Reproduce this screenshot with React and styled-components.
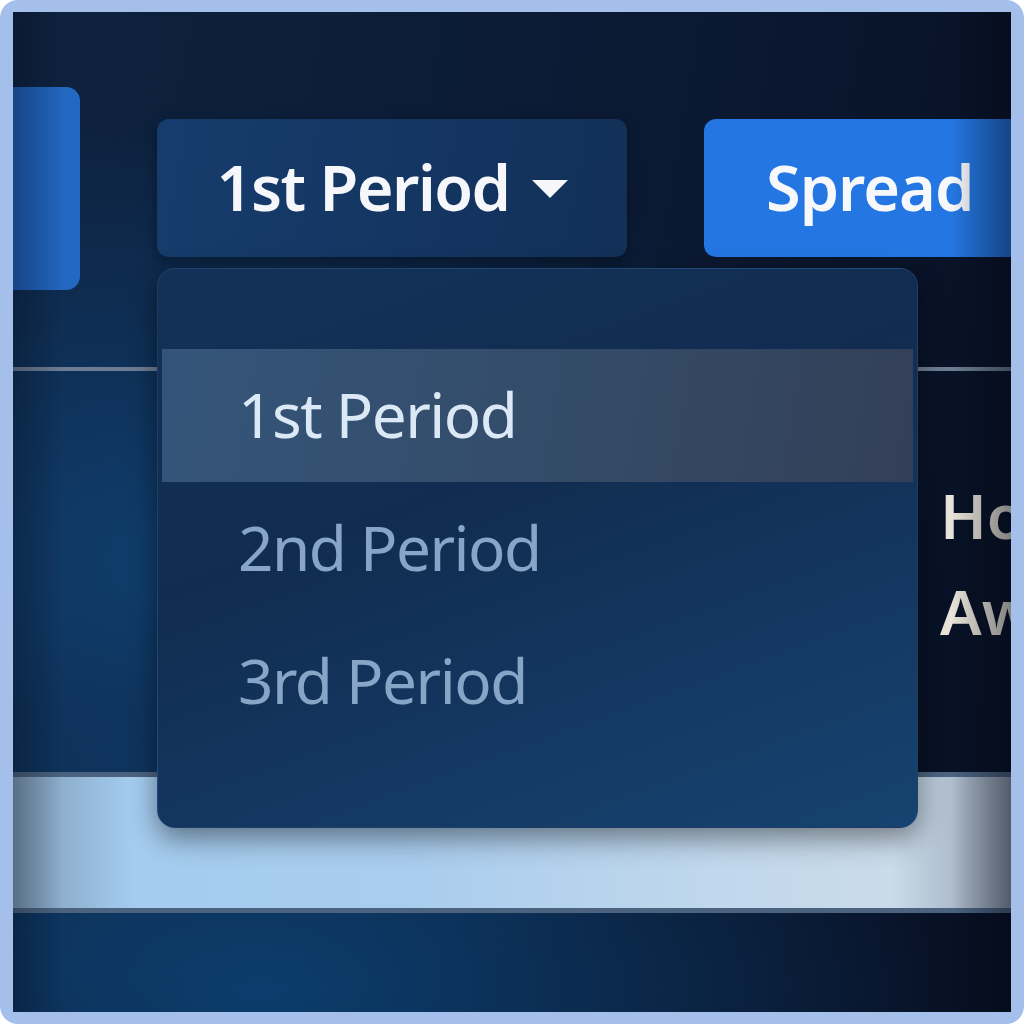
import React, { useState } from 'react';
import styled, { createGlobalStyle } from 'styled-components';

const GlobalStyle = createGlobalStyle`
    html,
    body {
        margin: 0;
        padding: 0;
        background: #ffffff;
    }
    body {
        font-family: 'Noto Sans', 'Open Sans', 'DejaVu Sans', sans-serif;
    }
`;

const Frame = styled.div`
    width: 1024px;
    height: 1024px;
    box-sizing: border-box;
    padding: 12px 13px 12px 13px;
    background: #a4bfe9;
    border-radius: 18px;
`;

const Screen = styled.div`
    position: relative;
    height: 1000px;
    overflow: hidden;
    display: flex;
    flex-direction: column;
    background:
        radial-gradient(ellipse 70% 45% at 18% 55%, rgba(16, 68, 120, 0.85) 0%, rgba(16, 68, 120, 0) 100%),
        radial-gradient(ellipse 70% 30% at 25% 98%, rgba(12, 64, 114, 0.9) 0%, rgba(12, 64, 114, 0) 100%),
        linear-gradient(100deg, #0e223f 0%, #0b1a33 55%, #070f22 100%);

    &:after {
        content: '';
        position: absolute;
        inset: 0;
        pointer-events: none;
        background: linear-gradient(
            90deg,
            rgba(3, 8, 20, 0.3) 0%,
            rgba(3, 8, 20, 0) 5%,
            rgba(3, 8, 20, 0) 94%,
            rgba(3, 8, 20, 0.45) 100%
        );
    }
`;

const Toolbar = styled.div`
    display: flex;
    align-items: flex-start;
    gap: 77px;
    padding-top: 75px;
    margin-left: -60px;
`;

const SideButton = styled.div`
    flex: none;
    width: 127px;
    height: 203px;
    border-radius: 14px;
    background: linear-gradient(90deg, #1c56a8 0%, #2369c4 100%);
`;

const DropdownWrap = styled.div`
    position: relative;
    flex: none;
    margin-top: 32px;
`;

const Toggle = styled.button`
    display: flex;
    align-items: center;
    justify-content: center;
    gap: 22px;
    width: 470px;
    height: 138px;
    padding: 0 0 4px 0;
    border: none;
    border-radius: 12px;
    background: linear-gradient(100deg, #163c6d 0%, #123058 100%);
    box-shadow: 0 4px 14px rgba(0, 0, 0, 0.35);
    color: #f5f7fb;
    font-family: inherit;
    font-size: 63px;
    font-weight: 600;
    letter-spacing: -1.5px;
    cursor: pointer;
`;

const Caret = styled.span`
    display: block;
    width: 0;
    height: 0;
    margin-top: 6px;
    border-left: 18px solid transparent;
    border-right: 18px solid transparent;
    border-top: 18px solid #f5f7fb;
`;

const Menu = styled.ul`
    position: absolute;
    top: 149px;
    left: 0;
    z-index: 5;
    width: 761px;
    height: 560px;
    box-sizing: border-box;
    margin: 0;
    padding: 80px 4px;
    list-style: none;
    border-radius: 18px;
    border: 1px solid rgba(120, 160, 210, 0.12);
    background: linear-gradient(160deg, #133158 0%, #112c50 40%, #164371 100%);
    box-shadow: 0 10px 28px rgba(0, 0, 0, 0.45);
`;

const MenuItem = styled.li`
    display: flex;
    align-items: center;
    height: 133px;
    padding: 0 0 4px 76px;
    box-sizing: border-box;
    font-size: 62px;
    font-weight: 400;
    letter-spacing: -1.5px;
    color: ${(p) => (p.$active ? '#dbe8f6' : '#87a6c7')};
    background: ${(p) => (p.$active ? 'linear-gradient(100deg, #34557a 0%, #344a66 60%, #333f57 100%)' : 'transparent')};
    cursor: pointer;
`;

const PrimaryButton = styled.button`
    flex: none;
    width: 420px;
    height: 138px;
    margin-top: 32px;
    padding: 0 0 4px 62px;
    text-align: left;
    border: none;
    border-radius: 12px;
    background: #2477e2;
    color: #f6f8fc;
    font-family: inherit;
    font-size: 63px;
    font-weight: 600;
    letter-spacing: -1px;
`;

const Divider = styled.div`
    height: 4px;
    margin-top: 77px;
    background: #6d7d93;
`;

const Content = styled.div`
    display: grid;
    grid-template-columns: 927px 1fr;
    padding-top: 96px;
    height: 401px;
    box-sizing: border-box;
`;

const TeamList = styled.div`
    grid-column: 2;
    display: flex;
    flex-direction: column;
    white-space: nowrap;
`;

const TeamName = styled.div`
    font-size: 62px;
    font-weight: 600;
    line-height: 96px;
    color: #e9e4d9;
`;

const Band = styled.div`
    height: 131px;
    border-top: 5px solid #4b637f;
    border-bottom: 5px solid #4b637f;
    background: linear-gradient(
        90deg,
        #7f9bb8 0%,
        #a4ccef 12%,
        #a9cdee 40%,
        #c0d7ec 70%,
        #cadbea 88%,
        #95a1b2 100%
    );
`;

const periods = ['1st Period', '2nd Period', '3rd Period'];

export default function App() {
    const [period, setPeriod] = useState(periods[0]);

    return (
        <>
            <GlobalStyle />
            <Frame>
                <Screen>
                    <Toolbar>
                        <SideButton />
                        <DropdownWrap>
                            <Toggle>
                                {period}
                                <Caret />
                            </Toggle>
                            <Menu>
                                {periods.map((p) => (
                                    <MenuItem key={p} $active={p === period} onClick={() => setPeriod(p)}>
                                        {p}
                                    </MenuItem>
                                ))}
                            </Menu>
                        </DropdownWrap>
                        <PrimaryButton>Spread</PrimaryButton>
                    </Toolbar>
                    <Divider />
                    <Content>
                        <TeamList>
                            <TeamName>Home</TeamName>
                            <TeamName>Away</TeamName>
                        </TeamList>
                    </Content>
                    <Band />
                </Screen>
            </Frame>
        </>
    );
}
